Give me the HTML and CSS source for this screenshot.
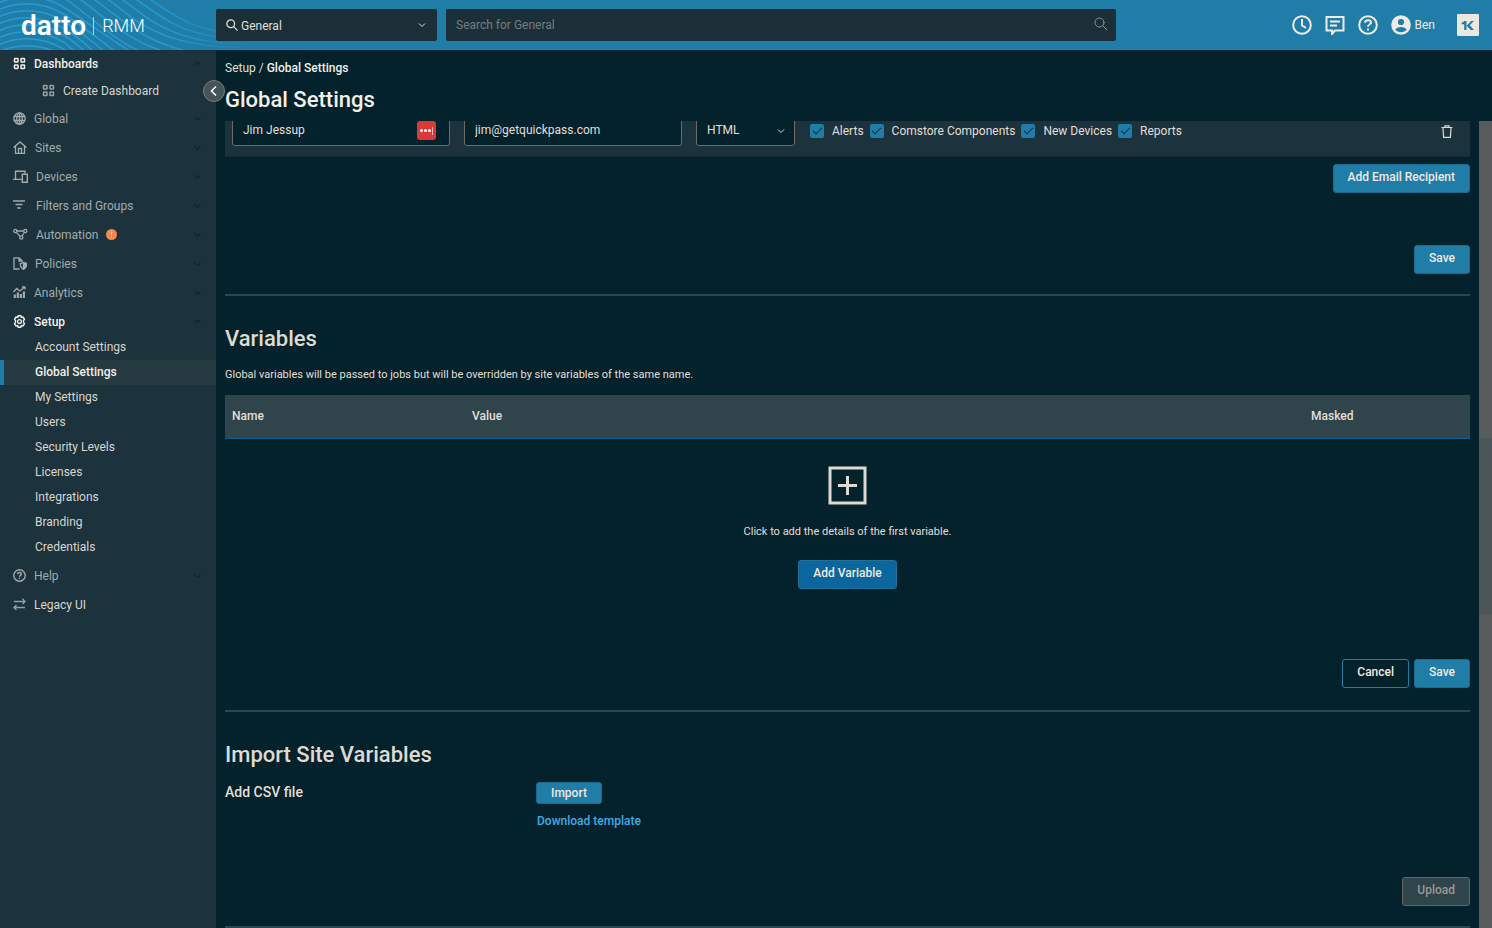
FILE: index.html
```html
<!DOCTYPE html>
<html lang="en">
<head>
<meta charset="utf-8">
<meta name="viewport" content="width=device-width, initial-scale=1">
<title>Global Settings - Datto RMM</title>
<link rel="stylesheet" href="styles.css">
</head>
<body>
<svg class="defs" aria-hidden="true">
  <symbol id="down" viewBox="0 0 8 8"><path d="M1 2.500l3 3 3-3" fill="none" stroke="currentColor" stroke-width="1"/></symbol>
  <symbol id="up" viewBox="0 0 8 8"><path d="M1 5.500l3-3 3 3" fill="none" stroke="currentColor" stroke-width="1"/></symbol>
  <symbol id="grid" viewBox="0 0 13 13"><g fill="none" stroke="currentColor" stroke-width="1.500"><rect x="1.500" y="1.500" width="3.500" height="3.500" rx=".6"/><rect x="8" y="1.500" width="3.500" height="3.500" rx=".6"/><rect x="1.500" y="8" width="3.500" height="3.500" rx=".6"/><rect x="8" y="8" width="3.500" height="3.500" rx=".6"/></g></symbol>
  <symbol id="lens" viewBox="0 0 14 14"><g fill="none" stroke="currentColor" stroke-linecap="round"><circle cx="5.500" cy="5.500" r="4.500"/><path d="M8.900 8.900L13 13"/></g></symbol>
</svg>
<div class="app">
  <header class="topbar">
    <svg class="waves" viewBox="0 0 260 50" aria-hidden="true">
      <defs><linearGradient id="fade" gradientUnits="userSpaceOnUse" x1="0" y1="0" x2="250" y2="0"><stop offset="0" stop-color="#259bd6"/><stop offset=".65" stop-color="#2398d2"/><stop offset="1" stop-color="#207da8"/></linearGradient></defs>
      <g fill="none" stroke="url(#fade)" stroke-width="1.500">
        <path d="M148-2C173 14 193 34 250 34"/>
        <path d="M134-2C159 14 179 39 250 39"/>
        <path d="M120-2C145 14 165 44 250 44"/>
        <path d="M106-2C131 14 151 48 250 48"/>
        <path d="M92-2C117 14 147 50 210 54"/>
        <path d="M78-2C103 14 133 50 186 56"/>
        <path d="M64-2C89 14 119 48 162 60"/>
        <path d="M-10 8C10-6 40-8 65 8S120 46 144 60"/>
        <path d="M-10 15C10 1 40-1 65 15S110 48 130 63"/>
        <path d="M-10 22C10 8 40 6 65 22S105 52 120 66"/>
        <path d="M-10 29C10 15 40 13 65 29S97 56 110 70"/>
        <path d="M-10 36C10 22 40 20 65 36S90 60 100 74"/>
        <path d="M-10 43C10 29 40 27 65 43L85 60"/>
        <path d="M-10 50C10 36 40 34 65 50"/>
        <path d="M-10 57C10 43 40 41 65 57"/>
      </g>
    </svg>
    <a class="brand" href="#"><span class="brand-name">datto</span><span class="brand-product">RMM</span></a>
    <div class="scope">
      <svg class="scope-icon"><use href="#lens"/></svg>
      <select class="scope-select" aria-label="Search scope"><option>General</option></select>
      <svg class="scope-arrow"><use href="#down"/></svg>
    </div>
    <div class="search">
      <input class="search-input" type="search" placeholder="Search for General" aria-label="Search">
      <svg class="search-icon"><use href="#lens"/></svg>
    </div>
    <nav class="tools" aria-label="Account">
      <button class="tool" aria-label="Recent"><svg viewBox="0 0 20 20"><circle cx="10" cy="10" r="8.800"/><path d="M10 4v6.500l4 2.300"/></svg></button>
      <button class="tool" aria-label="Messages"><svg viewBox="0 0 20 20"><path d="M1.500 2h17v13.500H10L7 19v-3.500H1.500zM5 6.500h10M5 10.500h7"/></svg></button>
      <button class="tool" aria-label="Help"><svg viewBox="0 0 20 20"><circle cx="10" cy="10" r="8.800"/><path d="M7 7.700c0-3.500 6-3.300 6-.2C13 9.500 10 9.500 10 11.700M10 13.400v2"/></svg></button>
      <button class="tool user"><svg viewBox="0 0 20 20"><circle class="solid" cx="10" cy="10" r="9.800"/><circle class="cut" cx="10" cy="7" r="3.100"/><path class="cut" d="M4.300 14.600c2-3.500 9.400-3.500 11.400 0-2.500 3.600-8.900 3.600-11.400 0z"/></svg>Ben</button>
      <a class="kaseya" href="#" aria-label="KaseyaOne"><svg viewBox="0 0 22 22"><rect width="22" height="22" rx="1" fill="#ece8e0"/><path d="M4.500 9L7.500 7h2v9H7.200v-5.700H4.500zM10 11.200L14.200 7H17l-4.300 4.300L17 16h-3.200L10 12.200z" fill="#207da8"/></svg></a>
    </nav>
  </header>

  <div class="body">
    <nav class="side" aria-label="Main">
      <a class="item first strong" href="#"><svg class="ico"><use href="#grid"/></svg>Dashboards<svg class="chev"><use href="#up"/></svg></a>
      <a class="item child" href="#"><svg class="ico dim"><use href="#grid"/></svg>Create Dashboard</a>
      <a class="item" href="#"><svg class="ico" viewBox="0 0 13 13"><circle cx="6.500" cy="6.500" r="5.700"/><ellipse cx="6.500" cy="6.500" rx="2.700" ry="5.700"/><path d="M1 4.500h11M1 8.500h11M6.500 1v11"/></svg>Global<svg class="chev"><use href="#down"/></svg></a>
      <a class="item" href="#"><svg class="ico w14" viewBox="0 0 14 13"><path d="M.6 6.500L7 .9l6.400 5.600M2.500 5v7.300h9V5M5.500 12V7.500h3V12"/></svg>Sites<svg class="chev"><use href="#down"/></svg></a>
      <a class="item" href="#"><svg class="ico w15" viewBox="0 0 15 13"><path d="M2.500 8.800V1.300h9.500v2M0 9.400h8.500M9.300 4.300h5v8h-5z" stroke-width="1.400"/></svg>Devices<svg class="chev"><use href="#down"/></svg></a>
      <a class="item" href="#"><svg class="ico w15" viewBox="0 0 15 13"><path d="M0 2h12M2.500 5.500h7M4.200 9h3.600" stroke-width="1.400"/></svg>Filters and Groups<svg class="chev"><use href="#down"/></svg></a>
      <a class="item" href="#"><svg class="ico w15" viewBox="0 0 15 13"><circle cx="2.300" cy="3" r="1.600"/><circle cx="12.300" cy="3" r="1.600"/><circle cx="8.300" cy="9.500" r="1.600"/><path d="M4 3h6.600M3.300 4.400l3.800 3.900M9.100 8l2.200-3.500"/></svg>Automation<svg class="alert" viewBox="0 0 11 11" role="img" aria-label="Alert"><circle cx="5.500" cy="5.500" r="5.500" fill="#f58a50"/><path d="M5.500 2.600v3.800M5.500 7.400v1" stroke="#f9dccb"/></svg><svg class="chev"><use href="#down"/></svg></a>
      <a class="item" href="#"><svg class="ico w14" viewBox="0 0 14 13"><path d="M6.500 12H1V.8h5L9 3.500V5M6 1v3h3"/><path d="M7.300 6.600l3.200-1 3.200 1c0 3-1 4.500-3.200 5.600-2.200-1.100-3.200-2.600-3.200-5.600z"/><path d="M10.500 5.600l3.200 1c0 3-1 4.500-3.200 5.600z" fill="currentColor"/></svg>Policies<svg class="chev"><use href="#down"/></svg></a>
      <a class="item" href="#"><svg class="ico" viewBox="0 0 13 13"><path d="M.5 6l3.200-3.500 3 2.500L12 1M9 1h3v2.500"/><path d="M1.800 12V8.500M4.800 12V6.500M7.800 12V8M10.900 12V5.500" stroke-width="2.200"/></svg>Analytics<svg class="chev"><use href="#down"/></svg></a>
      <a class="item strong" href="#"><svg class="ico" viewBox="0 0 13 13"><path d="M5.200.8h2.600l.5 1.700 1.700-.4 1.500 2.200-1 1.300v1.800l1 1.300-1.500 2.200-1.700-.4-.5 1.700H5.200l-.5-1.700-1.700.4-1.500-2.200 1-1.300V5.600l-1-1.300L3 2.100l1.700.4z" stroke-width="1.400"/><circle cx="6.500" cy="6.500" r="1.900" stroke-width="1.300"/></svg>Setup<svg class="chev"><use href="#up"/></svg></a>
      <div class="sub">
        <a class="leaf" href="#">Account Settings</a>
        <a class="leaf current" href="#" aria-current="page">Global Settings</a>
        <a class="leaf" href="#">My Settings</a>
        <a class="leaf" href="#">Users</a>
        <a class="leaf" href="#">Security Levels</a>
        <a class="leaf" href="#">Licenses</a>
        <a class="leaf" href="#">Integrations</a>
        <a class="leaf" href="#">Branding</a>
        <a class="leaf" href="#">Credentials</a>
      </div>
      <a class="item" href="#"><svg class="ico" viewBox="0 0 13 13"><circle cx="6.500" cy="6.500" r="5.700" stroke-width="1.400"/><path d="M4.700 5.200c0-2.400 3.700-2.300 3.700-.1 0 1.300-1.900 1.300-1.900 2.700M6.500 8.700V10" stroke-width="1.400"/></svg>Help<svg class="chev"><use href="#down"/></svg></a>
      <a class="item plain" href="#"><svg class="ico dim" viewBox="0 0 13 13"><path d="M1 3.500h11M9.500.8L12 3.500 9.500 6M12 9.500H1M3.500 7L1 9.500 3.500 12"/></svg>Legacy UI</a>
      <button class="collapse" aria-label="Collapse menu"><svg viewBox="0 0 10 12"><path d="M7 1.500L2.500 6 7 10.500"/></svg></button>
    </nav>

    <main class="main">
      <div class="heading">
        <div class="crumbs"><a href="#">Setup</a> / <b>Global Settings</b></div>
        <h1>Global Settings</h1>
      </div>
      <div class="scroller">
        <div class="content">
          <section class="section">
            <div class="recipient">
              <div class="field"><input type="text" value="Jim Jessup" aria-label="Recipient name"><span class="vault"><i></i><i></i><i></i><em></em></span></div>
              <div class="field"><input type="text" value="jim@getquickpass.com" aria-label="Recipient email"></div>
              <div class="field format"><select aria-label="Format"><option>HTML</option></select><svg><use href="#down"/></svg></div>
              <div class="checks">
                <label><input type="checkbox" checked>Alerts</label>
                <label><input type="checkbox" checked>Comstore Components</label>
                <label><input type="checkbox" checked>New Devices</label>
                <label><input type="checkbox" checked>Reports</label>
              </div>
              <button class="trash" aria-label="Delete recipient"><svg viewBox="0 0 12 13"><path d="M.5 2.500h11M4 2.200V.8h4v1.400M2 2.800l.6 9.500h6.800l.6-9.500"/></svg></button>
            </div>
            <div class="actions after-row"><button class="btn">Add Email Recipient</button></div>
            <div class="actions save-row"><button class="btn">Save</button></div>
          </section>

          <section class="section padded">
            <h2>Variables</h2>
            <p class="note">Global variables will be passed to jobs but will be overridden by site variables of the same name.</p>
            <table class="vars">
              <thead><tr><th class="name">Name</th><th>Value</th><th class="masked">Masked</th></tr></thead>
              <tbody><tr><td colspan="3">
                <div class="empty">
                  <svg class="plus" viewBox="0 0 39 39"><path d="M2 2h35v35H2zM19.500 10v19M10 19.500h19"/></svg>
                  <p>Click to add the details of the first variable.</p>
                  <button class="btn deep">Add Variable</button>
                </div>
              </td></tr></tbody>
            </table>
            <div class="actions vars-actions"><button class="btn ghost">Cancel</button><button class="btn">Save</button></div>
          </section>

          <section class="section padded">
            <h2>Import Site Variables</h2>
            <div class="import">
              <h3>Add CSV file</h3>
              <div class="import-body"><button class="btn small">Import</button><a class="link" href="#">Download template</a></div>
            </div>
            <div class="actions upload"><button class="btn off" disabled>Upload</button></div>
          </section>
        </div>
        <div class="track"><div class="thumb"></div></div>
      </div>
    </main>
  </div>
</div>
</body>
</html>
```
FILE: styles.css
```css
* { box-sizing: border-box; }
body { margin: 0; background: #04222b; color: #e3dfd7; font: 12px/16px Roboto, "Liberation Sans", sans-serif; }
a { color: inherit; text-decoration: none; }
h1, h2, h3, p { margin: 0; }
h1, h2 { font-size: 22px; line-height: 28px; font-weight: 500; }
h2 { color: #dfdad1; }
h3 { font-size: 14px; line-height: 20px; font-weight: 500; }
button, input, select { font: inherit; color: inherit; }
button { padding: 0; border: 0; background: none; }
select, input { appearance: none; border: 0; border-radius: 2px; outline: 0; min-width: 0; }
svg { display: block; flex: none; }
.defs { position: absolute; width: 0; height: 0; }

.app { display: flex; flex-direction: column; height: 100vh; overflow: hidden; }
.topbar { position: relative; display: flex; align-items: center; flex: none; height: 50px; background: #207da8; }
.waves { position: absolute; left: 0; top: 0; width: 260px; height: 50px; overflow: hidden; }
.brand { position: relative; display: flex; align-items: center; gap: 7px; flex: none; width: 216px; padding: 2px 0 0 21px; color: #fff; }
.brand-name { font-size: 28px; line-height: 32px; font-weight: 600; }
.brand-product { padding-left: 8px; border-left: 1px solid #a9d3e8; font-size: 18px; line-height: 18px; font-weight: 300; }
.scope { position: relative; flex: none; width: 221px; }
.scope-select { display: block; width: 100%; height: 32px; padding: 1px 25px 0; background: #1b2f38; }
.scope-icon { position: absolute; left: 10px; top: 10px; width: 12px; height: 12px; stroke-width: 1.5; }
.scope-arrow { position: absolute; right: 11px; top: 12px; width: 8px; height: 8px; }
.search { position: relative; flex: 1; margin-left: 9px; }
.search-input { display: block; width: 100%; height: 32px; padding: 0 36px 0 10px; background: #1b2f38; }
.search-input::placeholder { color: #747e81; opacity: 1; }
.search-icon { position: absolute; right: 8px; top: 8px; width: 14px; height: 14px; color: #8a9496; }
.tools { display: flex; align-items: center; gap: 13px; flex: none; margin-left: 176px; padding-right: 13px; }
.tool { display: flex; align-items: center; gap: 4px; color: #efebe4; }
.tool svg { width: 20px; height: 20px; fill: none; stroke: currentColor; stroke-width: 2; }
.tool .solid { fill: currentColor; stroke: none; }
.tool .cut { fill: #207da8; stroke: none; }
.kaseya { margin-left: 9px; }
.kaseya svg { width: 22px; height: 22px; }

.body { display: flex; flex: 1; min-height: 0; }
.side { position: relative; flex: none; width: 216px; background: #1c323c; color: #a3abab; }
.item { display: flex; align-items: center; gap: 8px; height: 29px; padding: 0 14px 0 13px; }
.item.first { height: 27px; }
.item.child { height: 27px; padding-left: 42px; color: #d8d6cf; }
.item.strong { color: #f3efe8; font-weight: 500; }
.item.plain { color: #d8d6cf; }
.ico { width: 13px; height: 13px; fill: none; stroke: currentColor; stroke-width: 1.3; }
.ico.w14 { width: 14px; }
.ico.w15 { width: 15px; }
.ico.dim { color: #96a0a1; }
.alert { width: 11px; height: 11px; }
.chev { width: 9px; height: 9px; margin-left: auto; color: #12262f; }
.sub { margin-top: -1px; padding-bottom: 1px; }
.leaf { display: flex; align-items: center; height: 25px; padding: 0 31px 2px; border-left: 4px solid transparent; color: #d8d6cf; }
.leaf.current { border-left-color: #207da8; background: #263a42; color: #f3efe8; font-weight: 500; }
.collapse { position: absolute; z-index: 1; right: -9px; top: 30px; display: grid; place-items: center; width: 22px; height: 22px; border: 1px solid #817b70; border-radius: 50%; background: #45545a; }
.collapse svg { width: 10px; height: 12px; fill: none; stroke: #fff; stroke-width: 1.5; }

.main { display: flex; flex-direction: column; flex: 1; min-width: 0; }
.heading { flex: none; height: 71px; padding: 10px 9px 0; }
.crumbs b { color: #f3efe8; font-weight: 500; }
.heading h1 { margin-top: 10px; color: #f3efe8; }
.scroller { display: flex; flex: 1; min-height: 0; overflow: hidden; }
.content { flex: 1; min-width: 0; padding: 0 9px; }
.track { flex: none; width: 13px; padding-top: 317px; background: #575b5c; }
.thumb { height: 176px; background: #4c5557; }

.section { border-bottom: 2px solid #2b474f; }
.section.padded { padding-top: 29px; }
.recipient { display: flex; align-items: center; gap: 14px; margin-top: -18px; padding: 11px 17px 10px 7px; border-bottom: 1px solid #142b34; background: #1c323c; }
.field { position: relative; flex: 0 1 218px; }
.field.format { flex-basis: 99px; }
.field input, .field select { display: block; width: 100%; height: 32px; padding: 0 10px; border: 1px solid #716c62; border-radius: 3px; background: #04222b; }
.field.format svg { position: absolute; right: 10px; top: 13px; width: 8px; height: 8px; }
.vault { position: absolute; right: 14px; top: 7px; display: flex; align-items: center; justify-content: center; gap: 1px; width: 19px; height: 19px; border-radius: 3px; background: #d93a38; }
.vault i { width: 3px; height: 3px; border-radius: 50%; background: #fff; }
.vault em { width: 1px; height: 8px; background: #f2b5b4; }
.checks { display: flex; gap: 6px; flex: none; padding: 1px 0 0 1px; }
.checks label { display: flex; align-items: center; gap: 8px; }
.checks input { display: grid; place-items: center; width: 14px; height: 14px; margin: 0; background: #207da8; }
.checks input:checked::after { content: ""; width: 8px; height: 4px; border: solid #0c303d; border-width: 0 0 1px 1px; transform: translateY(-1px) rotate(-45deg); }
.trash { margin-left: auto; padding-top: 3px; }
.trash svg { width: 12px; height: 13px; fill: none; stroke: #dfdad1; stroke-width: 1.2; }

.actions { display: flex; justify-content: flex-end; gap: 5px; }
.after-row { margin-top: 7px; }
.save-row { margin: 52px 0 20px; }
.vars-actions { margin: 70px 0 22px; }
.upload { margin: 48px 0 20px; }
.btn { height: 29px; padding: 0 14px 3px; border: 1px solid #1b698c; border-radius: 3px; background: #207da8; color: #efe9e0; font-weight: 500; }
.btn.deep { background: #0a669c; border-color: #1d719c; }
.btn.ghost { background: none; border-color: #207da8; }
.btn.small { height: 22px; padding-bottom: 1px; }
.btn.off { background: #2f444b; border-color: #65665f; color: #9a9a94; }

.note { margin-top: 14px; font-size: 11px; }
.vars { width: 100%; margin-top: 12px; border-collapse: separate; border-spacing: 0; table-layout: fixed; }
.vars th { height: 44px; padding: 0 7px 1px; border-bottom: 1px solid #0b5f92; background: #2f444b; text-align: left; font-weight: 500; }
.vars .name { width: 240px; }
.vars .masked { width: 166px; }
.vars td { padding: 27px 0 0; }
.empty { display: flex; flex-direction: column; align-items: center; font-size: 11px; }
.empty p { margin: 19px 0 20px; }
.empty .btn { font-size: 12px; }
.plus { width: 39px; height: 39px; fill: none; stroke: #dfdad1; stroke-width: 3; }
.import { display: grid; grid-template-columns: 311px 1fr; margin-top: 13px; }
.import-body { display: flex; flex-direction: column; align-items: flex-start; gap: 9px; }
.link { padding-left: 1px; color: #42aae3; font-weight: 500; }
```
